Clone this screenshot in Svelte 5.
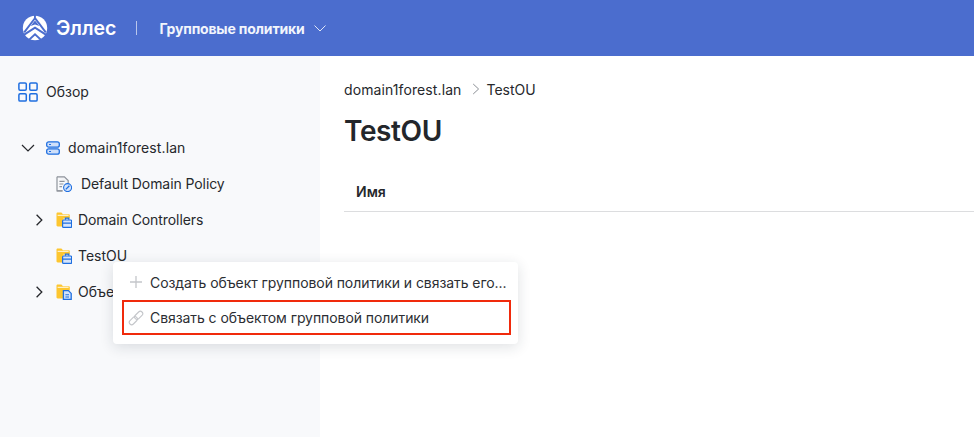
<script>
  const rows = [];
</script>

{#snippet folder(kind)}
  <svg class="ficon" viewBox="0 0 16 16" width="16" height="16" aria-hidden="true">
    <path d="M0.5 1.6C0.5 .9 1 .5 1.7 .5H5.4L7 2.2H12.6C13.3 2.2 13.8 2.7 13.8 3.4V6.6H7.4V14.4H1.7C1 14.4 .5 13.9 .5 13.2Z" fill="#fdc62f"/>
    <path d="M1.6 3.3H12.6" stroke="#fff" stroke-width="0.9" fill="none"/>
    {#if kind === 'case'}
      <rect x="6.6" y="8" width="9" height="7.4" rx="0.9" fill="#d5e4fb" stroke="#1f6fe0" stroke-width="1.2"/>
      <path d="M9.4 7.8V6.2H12.8V7.8M6.8 11.2H15.4" stroke="#1f6fe0" stroke-width="1.2" fill="none"/>
    {:else}
      <path d="M7.4 6.6H12.4L15.2 9.4V15.4H7.4Z" fill="#d5e4fb" stroke="#1f6fe0" stroke-width="1.3"/>
      <path d="M9.4 10.8H13M9.4 13H13" stroke="#1f6fe0" stroke-width="1.1"/>
    {/if}
  </svg>
{/snippet}

{#snippet chevron(dir)}
  <svg class="chev" viewBox="0 0 14 14" width="14" height="14" aria-hidden="true">
    {#if dir === 'down'}
      <path d="M1 4L7 10L13 4" fill="none" stroke="#26282c" stroke-width="1.2"/>
    {:else}
      <path d="M4.6 1.8L9.8 7L4.6 12.2" fill="none" stroke="#26282c" stroke-width="1.3"/>
    {/if}
  </svg>
{/snippet}

<div class="page">
  <header class="topbar">
    <svg class="logo" viewBox="0 0 26 26" width="26" height="26" aria-hidden="true">
      <circle cx="13" cy="13" r="12.2" fill="#fff"/>
      <g fill="none" stroke="#4b6dce">
        <path d="M13 -1L12.9 3.2L2.2 17.4" stroke-width="1.9"/>
        <path d="M13 3.2L23.8 17.4" stroke-width="1.9"/>
        <path d="M1 20.4L13 12.6L25 20.4" stroke-width="2"/>
        <path d="M6.4 25.4L13 19.4L19.6 25.4" stroke-width="1.9"/>
      </g>
      <path d="M13 5.6L17.4 11L13 9.4L8.6 11Z" fill="#4b6dce"/>
    </svg>
    <span class="brand">Эллес</span>
    <span class="divider"></span>
    <span class="module">Групповые политики</span>
    <svg class="modchev" viewBox="0 0 12 7" width="12" height="7" aria-hidden="true">
      <path d="M.5 .5L6 6L11.5 .5" fill="none" stroke="#dfe6f7" stroke-width="1"/>
    </svg>
  </header>

  <div class="body">
    <aside class="sidebar">
      <div class="overview">
        <svg viewBox="0 0 20 20" width="20" height="20" aria-hidden="true">
          <g fill="none" stroke="#1f6fe0" stroke-width="1.5">
            <rect x="0.9" y="0.9" width="7.4" height="7.4" rx="1.2"/>
            <rect x="11.7" y="0.9" width="7.4" height="7.4" rx="1.2"/>
            <rect x="0.9" y="11.7" width="7.4" height="7.4" rx="1.2"/>
            <rect x="11.7" y="11.7" width="7.4" height="7.4" rx="1.2"/>
          </g>
        </svg>
        <span>Обзор</span>
      </div>

      <ul class="tree">
        <li class="row root">
          {@render chevron('down')}
          <svg class="srv" viewBox="0 0 14 14" width="14" height="14" aria-hidden="true">
            <rect x="0.7" y="0.8" width="12.6" height="5.4" rx="2" fill="#cfe0fa" stroke="#1f6fe0" stroke-width="1.3"/>
            <rect x="0.7" y="7.8" width="12.6" height="5.4" rx="2" fill="#cfe0fa" stroke="#1f6fe0" stroke-width="1.3"/>
            <path d="M3 3.5H5M3 10.5H5" stroke="#1f6fe0" stroke-width="1"/>
          </svg>
          <span class="wide">domain1forest.lan</span>
        </li>
        <li class="row policy">
          <svg viewBox="0 0 16 16" width="16" height="16" aria-hidden="true">
            <path d="M1 .8H8.4L12.2 4.6V7.5M6.5 14.8H1Z" fill="#f2f3f5" stroke="#8f949c" stroke-width="1.2"/>
            <path d="M1 .8V14.8H6.5" fill="none" stroke="#8f949c" stroke-width="1.2"/>
            <path d="M3.4 5.4H8.6M3.4 8H7.4M3.4 10.6H6" stroke="#8f949c" stroke-width="1.1"/>
            <circle cx="11.6" cy="11.6" r="4" fill="#d5e4fb" stroke="#1f6fe0" stroke-width="1.1"/>
            <path d="M9.8 13.4L13.4 9.8" stroke="#1f6fe0" stroke-width="1.3"/>
          </svg>
          <span class="tight">Default Domain Policy</span>
        </li>
        <li class="row ou">
          {@render chevron('right')}
          {@render folder('case')}
          <span class="tight">Domain Controllers</span>
        </li>
        <li class="row ou leaf">
          {@render folder('case')}
          <span>TestOU</span>
        </li>
        <li class="row ou">
          {@render chevron('right')}
          {@render folder('doc')}
          <span>Объекты групповой политики</span>
        </li>
      </ul>
    </aside>

    <main class="content">
      <nav class="crumbs">
        <span class="wide">domain1forest.lan</span>
        <svg viewBox="0 0 8 12" width="8" height="12" aria-hidden="true">
          <path d="M1.2 1L6.6 6L1.2 11" fill="none" stroke="#8c9096" stroke-width="1"/>
        </svg>
        <span>TestOU</span>
      </nav>
      <h1>TestOU</h1>
      <div class="thead">Имя</div>
    </main>
  </div>

  <div class="menu">
    <div class="item">
      <svg viewBox="0 0 14 14" width="14" height="14" aria-hidden="true">
        <path d="M7 1V13M1 7H13" stroke="#c4c6ca" stroke-width="1.3" fill="none"/>
      </svg>
      <span>Создать объект групповой политики и связать его...</span>
    </div>
    <div class="item selected">
      <svg viewBox="0 0 16 16" width="16" height="16" aria-hidden="true">
        <g fill="none" stroke="#c4c6ca" stroke-width="1.1" transform="rotate(-45 8 8)">
          <rect x="-0.5" y="5.6" width="9.4" height="4.8" rx="2.4"/>
          <rect x="7.1" y="5.6" width="9.4" height="4.8" rx="2.4"/>
        </g>
      </svg>
      <span>Связать с объектом групповой политики</span>
    </div>
  </div>
</div>

<style>
  :global(body) {
    margin: 0;
    background: #fff;
    font-family: Inter, "Liberation Sans", sans-serif;
    color: #26282c;
    overflow: hidden;
  }
  .page {
    position: relative;
    width: 974px;
    height: 437px;
    overflow: hidden;
    font-size: 14px;
  }
  .topbar {
    height: 56px;
    box-sizing: border-box;
    background: #4b6dce;
    display: flex;
    align-items: center;
    padding-left: 22px;
    color: #fff;
  }
  .brand {
    font-size: 19.5px;
    font-weight: 600;
    margin-left: 8px;
  }
  .divider {
    width: 1px;
    height: 14px;
    background: #b9c6ec;
    margin-left: 20px;
  }
  .module {
    font-size: 14px;
    font-weight: 700;
    margin-left: 22px;
    letter-spacing: -0.18px;
    color: #f2f5fc;
  }
  .modchev {
    margin-left: 9px;
  }
  .body {
    display: flex;
    height: 381px;
  }
  .sidebar {
    width: 320px;
    flex: none;
    background: #f8f9fb;
    box-sizing: border-box;
    padding-top: 26px;
  }
  .overview {
    display: flex;
    align-items: center;
    gap: 8px;
    height: 20px;
    padding-left: 18px;
  }
  .overview span,
  .row span {
    padding-bottom: 2px;
  }
  .wide {
    letter-spacing: 0.1px;
  }
  .tight {
    letter-spacing: -0.08px;
  }
  .tree {
    list-style: none;
    margin: 28px 0 0;
    padding: 0;
  }
  .row {
    height: 36px;
    display: flex;
    align-items: center;
    white-space: nowrap;
  }
  .root {
    padding-left: 21px;
  }
  .srv {
    margin-left: 11px;
    margin-right: 8px;
  }
  .policy {
    padding-left: 56px;
  }
  .policy span {
    margin-left: 9px;
  }
  .ou {
    padding-left: 32px;
  }
  .ou.leaf {
    padding-left: 56px;
  }
  .ou .ficon {
    margin-left: 10px;
  }
  .ou.leaf .ficon {
    margin-left: 0;
  }
  .ou span {
    margin-left: 6px;
  }
  .content {
    flex: 1;
    padding: 24px 0 0 24px;
    min-width: 0;
  }
  .crumbs {
    display: flex;
    align-items: center;
    height: 18px;
  }
  .crumbs svg {
    margin: 0 7px 0 10px;
  }
  h1 {
    margin: 16px 0 0;
    font-size: 28px;
    line-height: 34px;
    font-weight: 600;
    color: #23262b;
    letter-spacing: -0.4px;
  }
  .thead {
    margin-top: 22px;
    height: 42px;
    box-sizing: border-box;
    padding: 13px 0 0 12px;
    font-weight: 600;
    font-size: 14px;
    line-height: 17px;
    border-bottom: 1px solid #dcdddf;
  }
  .menu {
    position: absolute;
    left: 113px;
    top: 262px;
    width: 405px;
    height: 82px;
    box-sizing: border-box;
    padding: 2px 7px 0 9px;
    background: #fff;
    border-radius: 4px;
    box-shadow: 0 3px 14px rgba(30, 40, 60, 0.14);
  }
  .item {
    height: 36px;
    box-sizing: border-box;
    display: flex;
    align-items: center;
    padding-left: 7px;
    white-space: nowrap;
    color: #2c2e33;
    gap: 7px;
    letter-spacing: -0.07px;
  }
  .selected {
    height: 35px;
    border: 2px solid #f02a0c;
    padding-left: 4px;
    gap: 6px;
  }
</style>
